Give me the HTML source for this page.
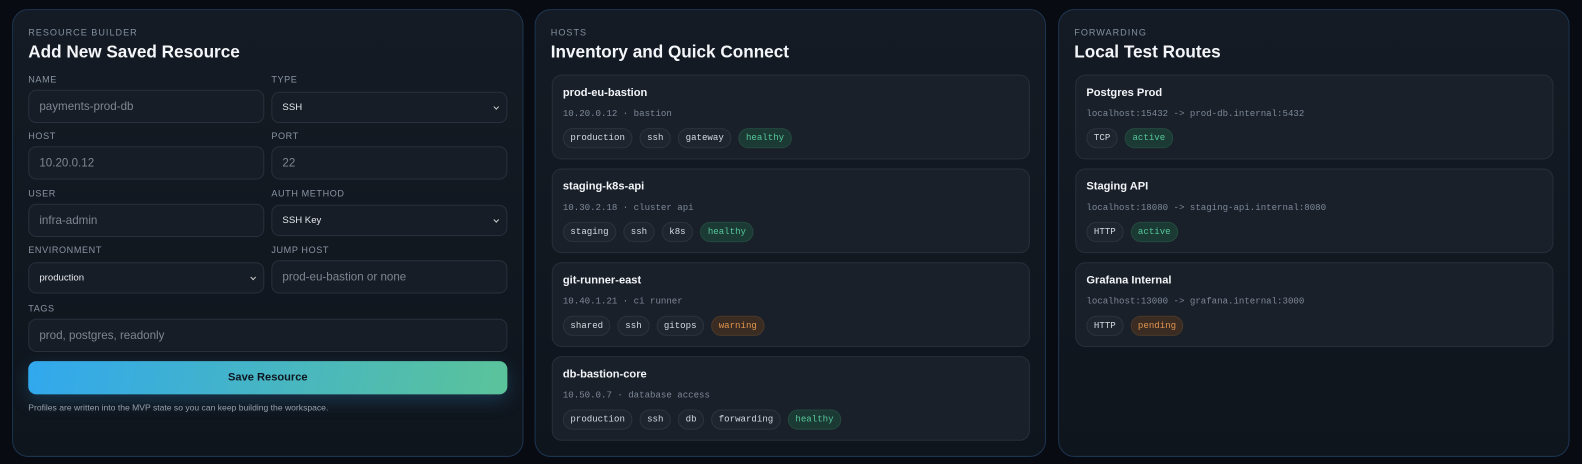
<!DOCTYPE html>
<html><head><meta charset="utf-8"><style>
*{box-sizing:border-box;margin:0;padding:0}
html,body{width:1582px;height:464px;overflow:hidden}
body{background:#080c12;font-family:"Liberation Sans",sans-serif;position:relative;color:#e8edf3}
#w{position:absolute;left:0;top:0;width:1582px;height:464px;transform:scale(1.0087);transform-origin:0 0}
.panel{position:absolute;top:9px;width:507px;height:444px;border:1px solid #1d3450;border-radius:16px;background:linear-gradient(180deg,#141b24,#0f151d)}
.eb{position:absolute;left:15px;top:17px;font-size:9px;letter-spacing:1px;color:#8390a0}
.h{position:absolute;left:15px;top:32px;font-size:17px;font-weight:bold;color:#f4f6f9}
.a{position:absolute}
.lbl{position:absolute;font-size:9px;letter-spacing:.6px;color:#8a95a3}
.inp{position:absolute;height:33px;width:234px;border:1px solid #27303c;border-radius:8px;background:#171d26;color:#7d8692;font-size:11.5px;padding:0 10px;line-height:33px}
.sel{position:absolute;height:31px;width:234px;border:1px solid #27303c;border-radius:8px;background:#171d26;color:#e6e9ee;font-size:9.5px;padding:0 10px;line-height:29px}
.sel:after{content:"";position:absolute;right:8px;top:12px;width:3px;height:3px;border-right:1px solid #ccc;border-bottom:1px solid #ccc;transform:rotate(45deg)}
.card{position:absolute;left:16px;width:474px;height:84px;border:1px solid #262f3b;border-radius:10px;background:#19202a}
.ct{position:absolute;left:10px;top:11px;font-size:11px;font-weight:bold;color:#f2f4f7}
.cm{position:absolute;left:10px;top:33px;font-family:"Liberation Mono",monospace;font-size:9px;color:#7d8897}
.tags{position:absolute;left:10px;top:52px;display:flex;gap:7px}
.t{height:20px;line-height:18px;padding:0 6.5px;border:1px solid #2a333f;border-radius:10px;background:#1e252f;font-family:"Liberation Mono",monospace;font-size:9px;color:#d6dbe2}
.g{background:#1c3a34;border-color:#24483f;color:#55c79a}
.w{background:#3a2c22;border-color:#4a3828;color:#e0954f}
</style></head><body><div id="w">
<div class="panel" style="left:12px">
<div class="eb">RESOURCE BUILDER</div>
<div class="h">Add New Saved Resource</div>
<div class="lbl" style="left:15px;top:64px">NAME</div>
<div class="lbl" style="left:256px;top:64px">TYPE</div>
<div class="inp" style="left:15px;top:79px">payments-prod-db</div>
<div class="sel" style="left:256px;top:81px">SSH</div>
<div class="lbl" style="left:15px;top:120px">HOST</div>
<div class="lbl" style="left:256px;top:120px">PORT</div>
<div class="inp" style="left:15px;top:135px">10.20.0.12</div>
<div class="inp" style="left:256px;top:135px">22</div>
<div class="lbl" style="left:15px;top:177px">USER</div>
<div class="lbl" style="left:256px;top:177px">AUTH METHOD</div>
<div class="inp" style="left:15px;top:192px">infra-admin</div>
<div class="sel" style="left:256px;top:193px">SSH Key</div>
<div class="lbl" style="left:15px;top:233px">ENVIRONMENT</div>
<div class="lbl" style="left:256px;top:233px">JUMP HOST</div>
<div class="sel" style="left:15px;top:250px">production</div>
<div class="inp" style="left:256px;top:248px">prod-eu-bastion or none</div>
<div class="lbl" style="left:15px;top:291px">TAGS</div>
<div class="inp" style="left:15px;top:306px;width:475px">prod, postgres, readonly</div>
<div class="a" style="left:15px;top:348px;width:475px;height:33px;border-radius:8px;background:linear-gradient(100deg,#31a8ee,#5bc39a);box-shadow:0 6px 18px rgba(50,150,220,.25);text-align:center;line-height:33px;font-size:11px;font-weight:bold;color:#0d1620">Save Resource</div>
<div class="a" style="left:15px;top:389px;font-size:8.5px;color:#95a0ad">Profiles are written into the MVP state so you can keep building the workspace.</div>
</div>

<div class="panel" style="left:530px">
<div class="eb">HOSTS</div>
<div class="h">Inventory and Quick Connect</div>
<div class="card" style="top:64px"><div class="ct">prod-eu-bastion</div><div class="cm">10.20.0.12 · bastion</div><div class="tags"><span class="t">production</span><span class="t">ssh</span><span class="t">gateway</span><span class="t g">healthy</span></div></div>
<div class="card" style="top:157px"><div class="ct">staging-k8s-api</div><div class="cm">10.30.2.18 · cluster api</div><div class="tags"><span class="t">staging</span><span class="t">ssh</span><span class="t">k8s</span><span class="t g">healthy</span></div></div>
<div class="card" style="top:250px"><div class="ct">git-runner-east</div><div class="cm">10.40.1.21 · ci runner</div><div class="tags"><span class="t">shared</span><span class="t">ssh</span><span class="t">gitops</span><span class="t w">warning</span></div></div>
<div class="card" style="top:343px"><div class="ct">db-bastion-core</div><div class="cm">10.50.0.7 · database access</div><div class="tags"><span class="t">production</span><span class="t">ssh</span><span class="t">db</span><span class="t">forwarding</span><span class="t g">healthy</span></div></div>
</div>

<div class="panel" style="left:1049px">
<div class="eb">FORWARDING</div>
<div class="h">Local Test Routes</div>
<div class="card" style="top:64px"><div class="ct">Postgres Prod</div><div class="cm">localhost:15432 -&gt; prod-db.internal:5432</div><div class="tags"><span class="t">TCP</span><span class="t g">active</span></div></div>
<div class="card" style="top:157px"><div class="ct">Staging API</div><div class="cm">localhost:18080 -&gt; staging-api.internal:8080</div><div class="tags"><span class="t">HTTP</span><span class="t g">active</span></div></div>
<div class="card" style="top:250px"><div class="ct">Grafana Internal</div><div class="cm">localhost:13000 -&gt; grafana.internal:3000</div><div class="tags"><span class="t">HTTP</span><span class="t w">pending</span></div></div>
</div>
</div></body></html>
